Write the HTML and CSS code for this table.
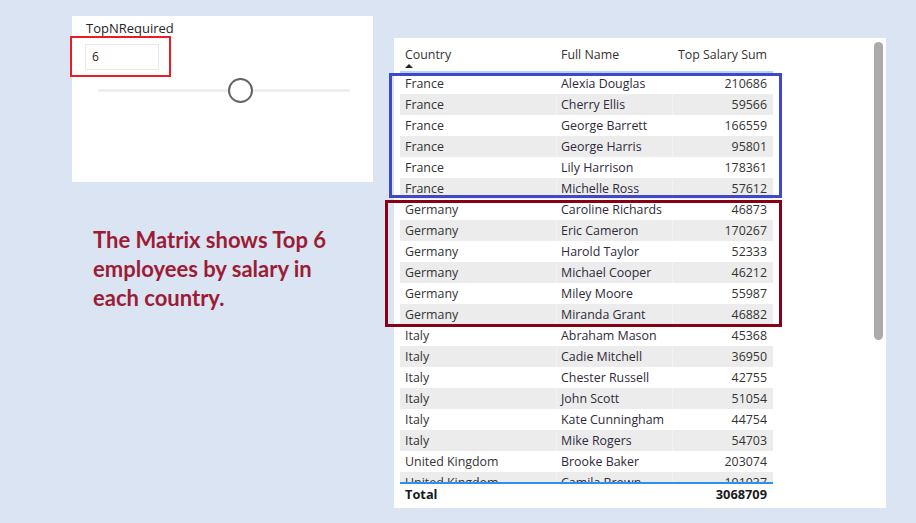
FILE: index.html
```html
<!DOCTYPE html>
<html>
<head>
<meta charset="utf-8">
<link rel="stylesheet" href="styles.css">
</head>
<body>
<div class="page">
  <div class="left">
    <div class="slicer">
      <div class="slicer-title">TopNRequired</div>
      <div class="slicer-input">6</div>
      <div class="red-box"></div>
      <div class="track"><div class="knob"></div></div>
    </div>
    <p class="note">The Matrix shows Top 6 employees by salary in each country.</p>
  </div>
  <div class="panel">
    <div class="table-area">
      <div class="thead">
        <div class="c1">Country<span class="sort"></span></div>
        <div class="c2">Full Name</div>
        <div class="c3">Top Salary Sum</div>
      </div>
      <div class="tbody">
        <div class="row"><div class="c1">France</div><div class="c2">Alexia Douglas</div><div class="c3">210686</div></div>
        <div class="row"><div class="c1">France</div><div class="c2">Cherry Ellis</div><div class="c3">59566</div></div>
        <div class="row"><div class="c1">France</div><div class="c2">George Barrett</div><div class="c3">166559</div></div>
        <div class="row"><div class="c1">France</div><div class="c2">George Harris</div><div class="c3">95801</div></div>
        <div class="row"><div class="c1">France</div><div class="c2">Lily Harrison</div><div class="c3">178361</div></div>
        <div class="row"><div class="c1">France</div><div class="c2">Michelle Ross</div><div class="c3">57612</div></div>
        <div class="row"><div class="c1">Germany</div><div class="c2">Caroline Richards</div><div class="c3">46873</div></div>
        <div class="row"><div class="c1">Germany</div><div class="c2">Eric Cameron</div><div class="c3">170267</div></div>
        <div class="row"><div class="c1">Germany</div><div class="c2">Harold Taylor</div><div class="c3">52333</div></div>
        <div class="row"><div class="c1">Germany</div><div class="c2">Michael Cooper</div><div class="c3">46212</div></div>
        <div class="row"><div class="c1">Germany</div><div class="c2">Miley Moore</div><div class="c3">55987</div></div>
        <div class="row"><div class="c1">Germany</div><div class="c2">Miranda Grant</div><div class="c3">46882</div></div>
        <div class="row"><div class="c1">Italy</div><div class="c2">Abraham Mason</div><div class="c3">45368</div></div>
        <div class="row"><div class="c1">Italy</div><div class="c2">Cadie Mitchell</div><div class="c3">36950</div></div>
        <div class="row"><div class="c1">Italy</div><div class="c2">Chester Russell</div><div class="c3">42755</div></div>
        <div class="row"><div class="c1">Italy</div><div class="c2">John Scott</div><div class="c3">51054</div></div>
        <div class="row"><div class="c1">Italy</div><div class="c2">Kate Cunningham</div><div class="c3">44754</div></div>
        <div class="row"><div class="c1">Italy</div><div class="c2">Mike Rogers</div><div class="c3">54703</div></div>
        <div class="row"><div class="c1">United Kingdom</div><div class="c2">Brooke Baker</div><div class="c3">203074</div></div>
        <div class="row"><div class="c1">United Kingdom</div><div class="c2">Camila Brown</div><div class="c3">191937</div></div>
      </div>
      <div class="tfoot">
        <div class="c1">Total</div>
        <div class="c2"></div>
        <div class="c3">3068709</div>
      </div>
      <div class="box box-blue"></div>
      <div class="box box-red"></div>
    </div>
    <div class="scrollbar"></div>
  </div>
</div>
</body>
</html>
```

FILE: styles.css
```css
html, body {
  margin: 0;
  padding: 0;
}
body {
  width: 916px;
  height: 523px;
  background: #dbe4f3;
  font-family: "Open Sans", "Noto Sans", sans-serif;
  overflow: hidden;
}
.page {
  display: flex;
  align-items: flex-start;
  gap: 21px;
  padding: 16px 0 0 72px;
}
.left {
  width: 301px;
}
.slicer {
  position: relative;
  height: 166px;
  background: #ffffff;
  padding: 0 0 0 14px;
  box-sizing: border-box;
}
.slicer-title {
  padding-top: 4px;
  font-size: 13px;
  line-height: 17px;
  color: #252423;
}
.slicer-input {
  margin-top: 7px;
  margin-left: -1px;
  width: 74px;
  height: 26px;
  box-sizing: border-box;
  border: 1px solid #e8e8e8;
  padding-left: 6px;
  font-size: 12px;
  line-height: 24px;
  color: #252423;
}
.red-box {
  position: absolute;
  left: -2px;
  top: 20px;
  width: 101px;
  height: 41px;
  box-sizing: border-box;
  border: 2px solid #ec1c24;
}
.track {
  position: relative;
  margin: 19px 0 0 12px;
  width: 252px;
  height: 3px;
  background: #efefef;
}
.knob {
  position: absolute;
  left: 130px;
  top: -11px;
  width: 25px;
  height: 25px;
  box-sizing: border-box;
  border: 2px solid #646464;
  border-radius: 50%;
  background: #ffffff;
}
.note {
  margin: 43px 0 0 21px;
  width: 250px;
  font-family: "Lato", "Open Sans", sans-serif;
  font-weight: 700;
  font-size: 22px;
  line-height: 29px;
  color: #9c1c35;
}
.panel {
  margin-top: 22px;
  width: 492px;
  height: 470px;
  background: #ffffff;
  display: flex;
  align-items: flex-start;
}
.table-area {
  position: relative;
  width: 480px;
  padding-left: 6px;
  box-sizing: border-box;
}
.thead, .row, .tfoot {
  display: grid;
  grid-template-columns: 156px 116px 101px;
  font-size: 12.4px;
  color: #333333;
}
.thead {
  border-bottom: 2px solid #b3d6f3;
  width: 373px;
  line-height: 20px;
  padding-top: 7px;
  height: 26px;
}
.thead > div {
  position: relative;
}
.thead .c3 {
  overflow: visible;
}
.sort {
  position: absolute;
  left: 5px;
  top: 19px;
  width: 0;
  height: 0;
  border-left: 4px solid transparent;
  border-right: 4px solid transparent;
  border-bottom: 4px solid #252423;
}
.c1, .c2 {
  padding-left: 5px;
  white-space: nowrap;
  overflow: hidden;
}
.c3 {
  text-align: right;
  padding-right: 6px;
  white-space: nowrap;
}
.tbody {
  height: 409px;
  overflow: hidden;
  width: 373px;
}
.row {
  height: 21px;
  line-height: 21px;
}
.row:nth-child(even) {
  background: #ececec;
}
.row:nth-child(even) .c2,
.row:nth-child(even) .c3 {
  border-left: 1px solid #f3f3f3;
}
.row:nth-child(even) .c2 {
  padding-left: 4px;
}
.row .c2 {
  color: #2f2a3c;
}
.tfoot {
  border-top: 2px solid #2b8ef9;
  width: 373px;
  height: 21px;
  line-height: 21px;
  font-size: 12.8px;
  font-weight: 700;
  color: #1a1a1a;
}
.box {
  position: absolute;
  box-sizing: border-box;
  border: 3px solid;
}
.box-blue {
  left: -5px;
  top: 35px;
  width: 393px;
  height: 125px;
  border-color: #3f48cc;
}
.box-red {
  left: -9px;
  top: 162px;
  width: 397px;
  height: 127px;
  border-color: #880015;
}
.scrollbar {
  margin-top: 4px;
  width: 9px;
  height: 298px;
  border-radius: 5px;
  background: #ababab;
}
```
